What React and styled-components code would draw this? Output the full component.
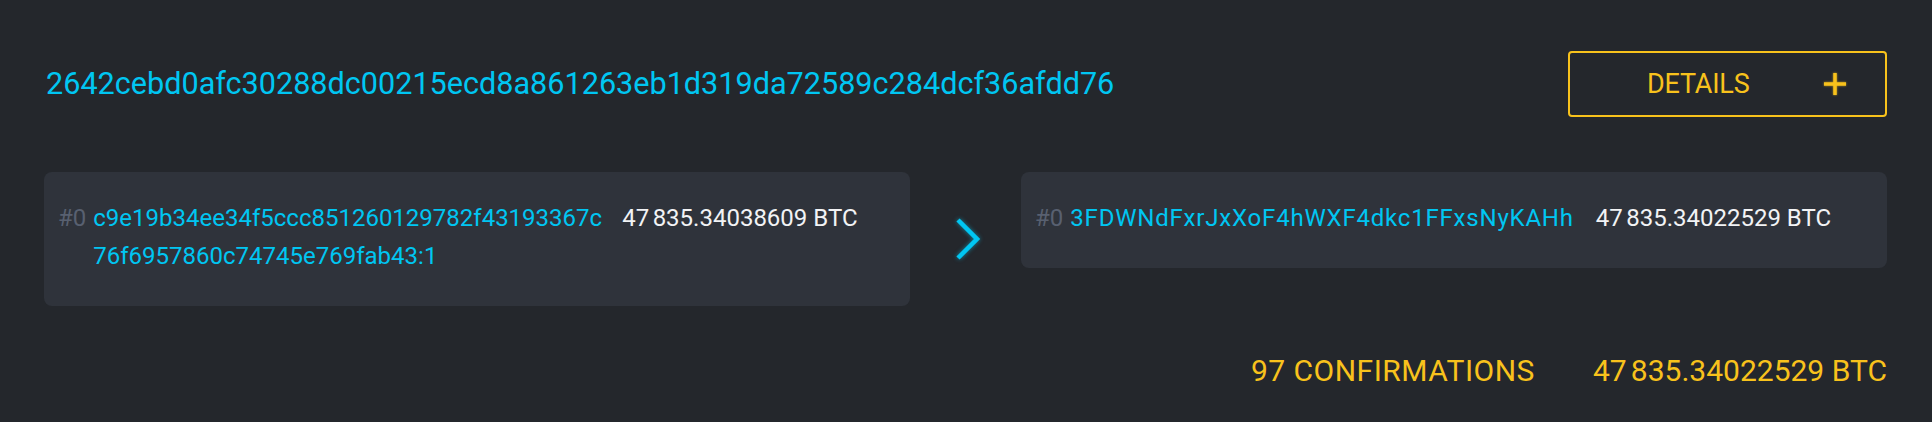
import React from 'react';
import styled, { createGlobalStyle } from 'styled-components';

const CYAN = '#00c6f2';
const YELLOW = '#f8c21c';

const GlobalStyle = createGlobalStyle`
  html, body {
    margin: 0;
    background: #24272c;
  }
  body {
    font-family: Roboto, 'Liberation Sans', sans-serif;
    -webkit-font-smoothing: antialiased;
  }
`;

const tx = {
  id: '2642cebd0afc30288dc00215ecd8a861263eb1d319da72589c284dcf36afdd76',
  confirmations: 97,
  total: '47835.34022529',
  inputs: [
    {
      index: 0,
      ref: 'c9e19b34ee34f5ccc851260129782f43193367c76f6957860c74745e769fab43:1',
      value: '47835.34038609',
    },
  ],
  outputs: [
    {
      index: 0,
      ref: '3FDWNdFxrJxXoF4hWXF4dkc1FFxsNyKAHh',
      value: '47835.34022529',
    },
  ],
};

const Thin = styled.span`
  margin-left: 0.14em;
`;

// 47835.1 -> 47 835.1 BTC, thousands split by a narrow gap
function Btc({ value }) {
  const [whole, frac] = value.split('.');
  const head = whole.slice(0, -3);
  const tail = whole.slice(-3);
  return (
    <>
      {head}
      <Thin />
      {tail}.{frac} BTC
    </>
  );
}

const Page = styled.div`
  padding: 51px 45px 40px 44px;
`;

const Header = styled.header`
  display: flex;
  justify-content: space-between;
  align-items: center;
`;

const TxId = styled.h1`
  margin: 0 0 0 2px;
  font-size: 30.6px;
  font-weight: 400;
  line-height: 36px;
  color: ${CYAN};
`;

const DetailsButton = styled.button`
  display: flex;
  align-items: center;
  justify-content: space-between;
  box-sizing: border-box;
  width: 319px;
  height: 66px;
  padding: 0 39px 0 77px;
  background: transparent;
  border: 2px solid ${YELLOW};
  border-radius: 4px;
  color: ${YELLOW};
  font-family: inherit;
  font-size: 27px;
  font-weight: 400;
  letter-spacing: -0.2px;
  cursor: pointer;
`;

const PlusIcon = styled.svg`
  width: 22px;
  height: 22px;
  filter: drop-shadow(0 0 1px rgba(248, 194, 28, 0.7));
`;

const Flow = styled.section`
  display: grid;
  grid-template-columns: 1fr 111px 1fr;
  align-items: start;
  margin-top: 55px;
`;

const Card = styled.div`
  display: flex;
  align-items: flex-start;
  padding: 27px 14px 31px;
  background: #2f333b;
  border-radius: 8px;
  font-size: 24px;
  line-height: 38px;
`;

const Index = styled.span`
  flex: none;
  margin-right: 7px;
  color: #586070;
`;

const Ref = styled.span`
  max-width: ${(p) => p.$max || 'none'};
  color: ${CYAN};
  letter-spacing: ${(p) => p.$spacing || 'normal'};
  word-break: break-all;
`;

const Amount = styled.span`
  flex: none;
  margin-left: ${(p) => p.$gap || '14px'};
  color: #f2f3f5;
  white-space: nowrap;
`;

const Arrow = styled.svg`
  align-self: center;
  justify-self: center;
  width: 30px;
  height: 44px;
  margin-left: 6px;
  filter: drop-shadow(0 0 2px rgba(0, 198, 242, 0.6));
`;

const Summary = styled.footer`
  display: flex;
  justify-content: flex-end;
  gap: 58px;
  margin-top: 47px;
  color: ${YELLOW};
  font-size: 30px;
  line-height: 36px;
`;

const Confirmations = styled.span`
  letter-spacing: 0.5px;
`;

function Entry({ item, refMax, spacing, gap }) {
  return (
    <Card>
      <Index>#{item.index}</Index>
      <Ref $max={refMax} $spacing={spacing}>
        {item.ref}
      </Ref>
      <Amount $gap={gap}>
        <Btc value={item.value} />
      </Amount>
    </Card>
  );
}

export default function App() {
  return (
    <>
      <GlobalStyle />
      <Page>
        <Header>
          <TxId>{tx.id}</TxId>
          <DetailsButton>
            DETAILS
            <PlusIcon viewBox='0 0 22 22'>
              <path d='M11 0v22M0 11h22' stroke={YELLOW} strokeWidth='3.5' />
            </PlusIcon>
          </DetailsButton>
        </Header>

        <Flow>
          <div>
            {tx.inputs.map((item) => (
              <Entry key={item.ref} item={item} refMax='515px' />
            ))}
          </div>
          <Arrow viewBox='0 0 30 44'>
            <polyline
              points='4,3 23,22 4,41'
              fill='none'
              stroke={CYAN}
              strokeWidth='4.5'
            />
          </Arrow>
          <div>
            {tx.outputs.map((item) => (
              <Entry key={item.ref} item={item} spacing='0.8px' gap='22px' />
            ))}
          </div>
        </Flow>

        <Summary>
          <Confirmations>{tx.confirmations} CONFIRMATIONS</Confirmations>
          <span>
            <Btc value={tx.total} />
          </span>
        </Summary>
      </Page>
    </>
  );
}
